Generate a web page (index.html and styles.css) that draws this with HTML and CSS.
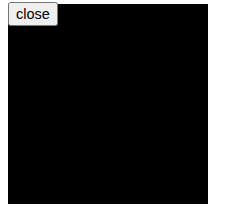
FILE: index.html
```html
<!DOCTYPE html>
<html>
<head>
<meta charset="utf-8">
<link rel="stylesheet" href="styles.css">
</head>
<body>
<div class="stage">
  <div class="screen">
    <button class="close-btn">close</button>
  </div>
</div>
</body>
</html>
```
FILE: styles.css
```css
html, body {
  margin: 0;
  background: #fff;
}
.stage {
  padding: 4px 8px;
}
.screen {
  position: relative;
  width: 200px;
  height: 200px;
  background: #000;
}
.close-btn {
  position: absolute;
  top: -2px;
  left: 0;
  font-family: "Liberation Sans", Arial, sans-serif;
  font-size: 14.5px;
  padding: 2px 6px;
  margin: 0;
}
```
